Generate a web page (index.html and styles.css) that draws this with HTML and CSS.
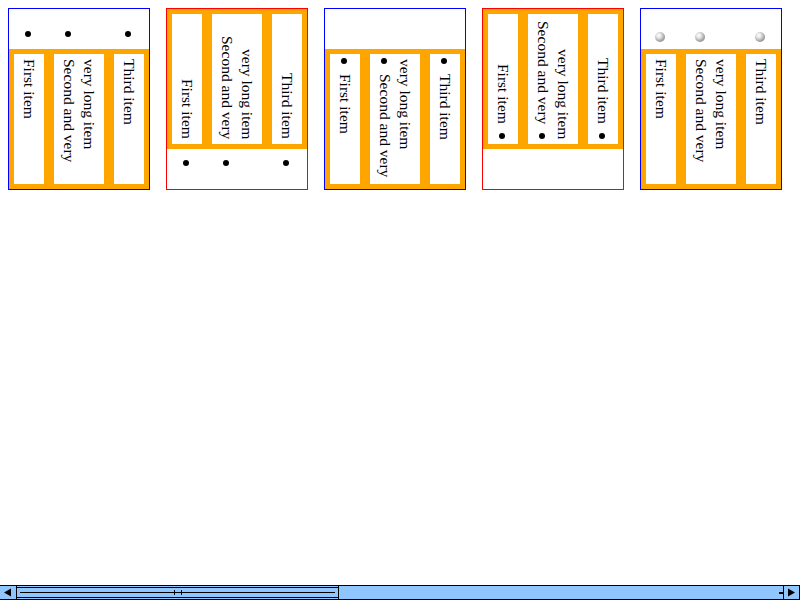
FILE: index.html
```html
<!DOCTYPE html>
<html>
<head>
<meta charset="utf-8">
<link rel="stylesheet" href="styles.css">
</head>
<body>
<div class="row">
  <div class="box ltr"><ul class="list outside">
    <li>First item</li><li>Second and very very long item</li><li>Third item</li>
  </ul></div>
  <div class="box rtl"><ul class="list outside">
    <li>First item</li><li>Second and very very long item</li><li>Third item</li>
  </ul></div>
  <div class="box ltr"><ul class="list inside">
    <li>First item</li><li>Second and very very long item</li><li>Third item</li>
  </ul></div>
  <div class="box rtl"><ul class="list inside">
    <li>First item</li><li>Second and very very long item</li><li>Third item</li>
  </ul></div>
  <div class="box ltr"><ul class="list outside image">
    <li>First item</li><li>Second and very very long item</li><li>Third item</li>
  </ul></div>
  <div class="box rtl"><ul class="list outside image">
    <li>First item</li><li>Second and very very long item</li><li>Third item</li>
  </ul></div>
</div>
<div class="hscroll">
  <div class="sb-btn sb-left"><svg width="16" height="13" viewBox="0 0 16 13"><polygon points="4,6.5 11,2.5 11,10.5" fill="#000"/></svg></div>
  <div class="sb-thumb"><div class="sb-thumb-in"><div class="sb-line"><span class="sb-tick t1"></span><span class="sb-tick t2"></span></div></div></div>
  <div class="sb-track"></div>
  <div class="sb-stub"></div>
  <div class="sb-btn sb-right"><svg width="16" height="13" viewBox="0 0 16 13"><polygon points="4,2.5 11,6.5 4,10.5" fill="#000"/></svg></div>
</div>
</body>
</html>
```
FILE: styles.css
```css
html, body {
  overflow: hidden;
}
body {
  margin: 8px;
  font: 15.5px/20px "Liberation Serif", serif;
  color: #000;
  background: #fff;
}
.row {
  display: flex;
  gap: 16px;
}
.box {
  flex: none;
  width: 140px;
  height: 180px;
  border: 1px solid #00f;
}
.box.rtl {
  border-color: #f00;
}
.list {
  writing-mode: vertical-lr;
  list-style: none;
  margin: 0;
  padding: 0;
  width: 140px;
  height: 140px;
  background: #ffa500;
}
.ltr .list {
  margin-top: 40px;
}
.rtl .list {
  direction: rtl;
}
.list li {
  position: relative;
  border: 5px solid #ffa500;
  background: #fff;
  padding: 5px;
}
.list li::before {
  content: "";
  position: absolute;
  left: 11px;
  width: 6px;
  height: 6px;
  border-radius: 50%;
  background: #000;
}
/* outside disc markers */
.ltr .outside li::before {
  top: -23px;
}
.rtl .outside li::before {
  bottom: -22px;
}
/* inside disc markers */
.inside li {
  text-indent: 15px;
}
.ltr .inside li::before {
  top: 4px;
}
.rtl .inside li::before {
  bottom: 5px;
}
/* image markers */
.outside.image li::before {
  left: 9px;
  width: 10px;
  height: 10px;
  background: radial-gradient(circle at 38% 35%, #fff 0, #e6e6e6 25%, #a8a8a8 60%, #6e6e6e 100%);
}
.ltr .outside.image li::before {
  top: -22px;
}
.rtl .outside.image li::before {
  bottom: -22px;
}

/* fake horizontal scrollbar */
.hscroll {
  position: fixed;
  left: 0;
  right: 0;
  bottom: 0;
  height: 13px;
  border-top: 1px solid #000;
  border-bottom: 1px solid #000;
  background: #8fc6fd;
  display: flex;
}
.sb-btn {
  flex: none;
  width: 16px;
  height: 13px;
}
.sb-btn svg {
  display: block;
}
.sb-left {
  border-right: 1px solid #000;
}
.sb-right {
  border-left: 1px solid #000;
  border-right: 1px solid #000;
  width: 15px;
}
.sb-thumb {
  flex: none;
  width: 321px;
  border-right: 1px solid #000;
  padding-top: 1px;
}
.sb-thumb-in {
  box-sizing: border-box;
  height: 11px;
  border-top: 1px solid #000;
  border-bottom: 1px solid #000;
  padding: 4px 3px 0;
}
.sb-line {
  position: relative;
  height: 1px;
  background: #000;
}
.sb-tick {
  position: absolute;
  top: -2px;
  width: 1px;
  height: 5px;
  background: #000;
}
.t1 { left: 154px; }
.t2 { left: 161px; }
.sb-track {
  flex: 1;
}
.sb-stub {
  flex: none;
  width: 4px;
  height: 2px;
  margin-top: 6px;
  background: #000;
}
```
